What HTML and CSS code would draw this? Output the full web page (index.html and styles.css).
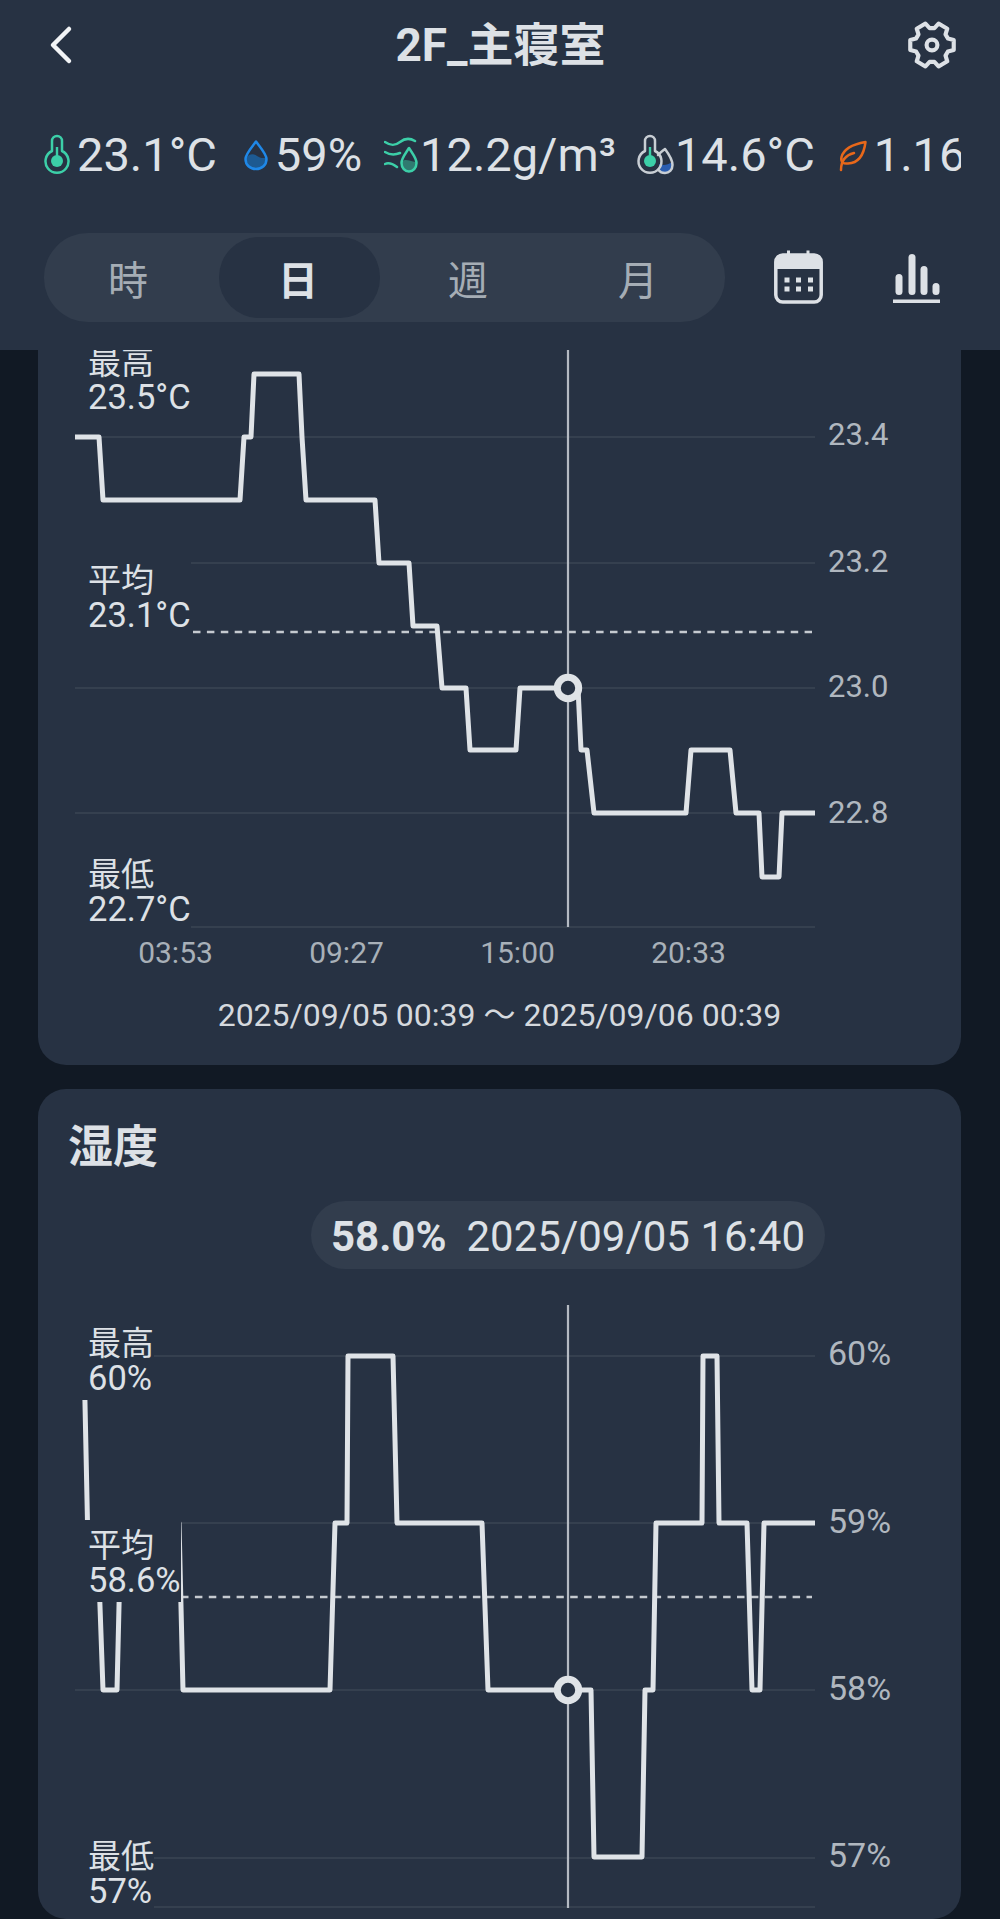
FILE: index.html
```html
<!DOCTYPE html>
<html lang="ja">
<head>
  <meta charset="UTF-8">
  <meta name="viewport" content="width=device-width, initial-scale=1.0">
  <title>2F_主寝室</title>
  <link rel="stylesheet" href="styles.css">
</head>
<body>
  <header class="header">
    <div class="topbar">
      <svg class="back" viewBox="48 24 26 40"><path d="M69 28 L53 44 L69 60" /></svg>
      <h1 class="title">2F_主寝室</h1>
      <svg class="gear" viewBox="-25 -25 50 50">
        <polygon points="15.3,-6.2 20.9,-4.8 20.9,4.8 15.3,6.2 13,10.2 14.7,15.7 6.3,20.6 2.3,16.3 -2.3,16.3 -6.3,20.6 -14.7,15.7 -13,10.2 -15.3,6.2 -20.9,4.8 -20.9,-4.8 -15.3,-6.2 -13,-10.2 -14.7,-15.7 -6.3,-20.6 -2.3,-16.3 2.3,-16.3 6.3,-20.6 14.7,-15.7 13,-10.2" />
        <circle r="5.2" />
      </svg>
    </div>

    <div class="metrics">
      <div class="metric metric-temp">
        <svg class="icon-temp" viewBox="44 132 27 42">
          <path class="teal-line" d="M53 149 V139 a5 5 0 0 1 10 0 V149 a11.5 11.5 0 1 1 -10 0 Z" />
          <circle class="teal-fill" cx="58" cy="159" r="6" />
          <rect class="teal-fill" x="56.8" y="145" width="2.4" height="10" />
        </svg>
        <span>23.1°C</span>
      </div>
      <div class="metric metric-hum">
        <svg class="icon-drop" viewBox="243 137 26 32">
          <path class="drop-water" d="M246 156 C250 151 254 152 257 154 C260 156 264 157 266 155 C267 162 262 167 256 167 C250 167 245 162 246 156 Z" />
          <path class="drop-line" d="M256 139.5 C252 145 245.5 152 245.5 157 C245.5 163 250 167 256 167 C262 167 266.5 163 266.5 157 C266.5 152 260 145 256 139.5 Z" />
        </svg>
        <span>59%</span>
      </div>
      <div class="metric metric-abs">
        <svg class="icon-mist" viewBox="384 136 36 37">
          <path class="teal-line" d="M385 141 C391 145 395 145 400 141 C405 137 410 137 415 140" />
          <path class="teal-line" d="M385 151 C390 154 395 154 400 152" />
          <path class="teal-line" d="M385 163 C389 161 393 163 397 166" />
          <path class="mist-water" d="M402 161 C405 157 409 160 416 161 C417 166 413 170 409 170 C405 170 401 166 402 161 Z" />
          <path class="teal-line" d="M409 147 C406 152 401.5 157 401.5 162 C401.5 167 405 170.5 409 170.5 C413 170.5 416.5 167 416.5 162 C416.5 157 412 152 409 147 Z" />
        </svg>
        <span>12.2g/m³</span>
      </div>
      <div class="metric metric-dew">
        <svg class="icon-dew" viewBox="638 132 38 42">
          <path class="dew-water" d="M661 162 C665 164 670 163 674 160 C675 167 671 171 667 171 C664 171 662 169 661 167 Z" />
          <path class="grey-line" d="M660 153 C664 149 666 148 667 147 C670 151 674.5 157 674.5 163 C674.5 168 671 171 667 171 C664.5 171 662 170 660.5 168" />
          <path class="grey-line" d="M647 149 V139 a5 5 0 0 1 10 0 V149 a11.5 11.5 0 1 1 -10 0 Z" />
          <circle class="teal-fill" cx="652" cy="159" r="6" />
          <rect class="teal-fill" x="650.8" y="145" width="2.4" height="10" />
        </svg>
        <span>14.6°C</span>
      </div>
      <div class="metric metric-vpd">
        <svg class="icon-leaf" viewBox="840 136 30 33">
          <path class="leaf-line" d="M867.5 139 C856 141 846 145 843.5 154 C842.5 159 845 161 850 160.5 C861 160 866 151 867.5 139 Z" />
          <path class="leaf-line" d="M843 167 C843 158 848 152 856 150" />
        </svg>
        <span>1.16</span>
      </div>
    </div>

    <div class="toolbar">
      <div class="tabs">
        <div class="tab">時</div>
        <div class="tab active">日</div>
        <div class="tab">週</div>
        <div class="tab">月</div>
      </div>
      <svg class="icon-calendar" viewBox="772 248 53 57">
        <rect class="cal-frame" x="775.8" y="254" width="45.4" height="47" rx="7" />
        <path class="cal-fill" d="M775.8 268 V261 a7 7 0 0 1 7 -7 H814.2 a7 7 0 0 1 7 7 V268 Z" />
        <rect class="cal-fill" x="787" y="249.5" width="3" height="6" />
        <rect class="cal-fill" x="806.5" y="249.5" width="3" height="6" />
        <rect class="cal-fill" x="784.5" y="276.5" width="5" height="5" />
        <rect class="cal-fill" x="796" y="276.5" width="5" height="5" />
        <rect class="cal-fill" x="808" y="276.5" width="5" height="5" />
        <rect class="cal-fill" x="784.5" y="285.5" width="5" height="5" />
        <rect class="cal-fill" x="796" y="285.5" width="5" height="5" />
        <rect class="cal-fill" x="808" y="285.5" width="5" height="5" />
      </svg>
      <svg class="icon-bars" viewBox="891 250 51 52">
        <rect x="895.5" y="272" width="7" height="21" rx="3.5" />
        <rect x="908.5" y="252" width="7" height="41" rx="3.5" />
        <rect x="920.5" y="264" width="7" height="29" rx="3.5" />
        <rect x="932.5" y="281" width="7" height="12" rx="3.5" />
        <rect x="893" y="297.5" width="47" height="3.5" />
      </svg>
    </div>
  </header>

  <main class="content">
    <section class="card card-first">
      <div class="chart chart-temp">
        <svg class="plot" viewBox="38 350 923 582">
          <line class="grid" x1="75" y1="437" x2="815" y2="437" />
          <line class="grid" x1="75" y1="563" x2="815" y2="563" />
          <line class="grid" x1="75" y1="688" x2="815" y2="688" />
          <line class="grid" x1="75" y1="813" x2="815" y2="813" />
          <line class="grid" x1="75" y1="927" x2="815" y2="927" />
          <line class="avg" x1="193" y1="632" x2="812" y2="632" />
          <line class="cursor" x1="568" y1="350" x2="568" y2="927" />
          <polyline class="data" points="75,437 99,437 103,500 240,500 244,437 251,437 254,374 299,374 302,437 306,500 375,500 379,563 409,563 413,626 437,626 442,688 466,688 470,750 516,750 520,688 578,688 581,750 587,750 594,813 686,813 691,750 730,750 736,813 759,813 762,877 779,877 782,813 815,813" />
          <circle class="marker" cx="568" cy="688" r="10.7" />
          <text class="axis" x="828" y="445">23.4</text>
          <text class="axis" x="828" y="572">23.2</text>
          <text class="axis" x="828" y="697">23.0</text>
          <text class="axis" x="828" y="823">22.8</text>
        </svg>
        <div class="tag temp-max">最高<br><span class="tag-value">23.5°C</span></div>
        <div class="tag temp-avg">平均<br><span class="tag-value">23.1°C</span></div>
        <div class="tag temp-min">最低<br><span class="tag-value">22.7°C</span></div>
      </div>
      <div class="ticks">
        <span>03:53</span>
        <span>09:27</span>
        <span>15:00</span>
        <span>20:33</span>
      </div>
      <p class="range">2025/09/05 00:39 〜 2025/09/06 00:39</p>
    </section>

    <section class="card">
      <h2 class="card-title">湿度</h2>
      <div class="readout"><b>58.0%</b><span>2025/09/05 16:40</span></div>
      <div class="chart chart-hum">
        <svg class="plot" viewBox="38 1300 923 619">
          <line class="grid" x1="75" y1="1356" x2="815" y2="1356" />
          <line class="grid" x1="75" y1="1523" x2="815" y2="1523" />
          <line class="grid" x1="75" y1="1690" x2="815" y2="1690" />
          <line class="grid" x1="75" y1="1858" x2="815" y2="1858" />
          <line class="grid" x1="75" y1="1907" x2="815" y2="1907" />
          <line class="avg" x1="181" y1="1597" x2="812" y2="1597" />
          <line class="cursor" x1="568" y1="1305" x2="568" y2="1908" />
          <polyline class="data" points="75,1356 84,1356 87.5,1523 97,1523 103,1690 117,1690 121,1523 179,1523 183,1690 330,1690 335,1523 347,1523 348,1356 393,1356 397,1523 482,1523 488,1690 591,1690 594,1857 642,1857 645,1690 653,1690 656,1523 702,1523 703,1356 717,1356 719,1523 747,1523 752,1690 760,1690 764,1523 815,1523" />
          <circle class="marker" cx="568" cy="1690" r="10.7" />
          <text class="axis axis-pct" x="828" y="1365">60%</text>
          <text class="axis axis-pct" x="828" y="1533">59%</text>
          <text class="axis axis-pct" x="828" y="1700">58%</text>
          <text class="axis axis-pct" x="828" y="1867">57%</text>
        </svg>
        <div class="tag hum-max">最高<br><span class="tag-value">60%</span></div>
        <div class="tag hum-avg">平均<br><span class="tag-value">58.6%</span></div>
        <div class="tag hum-min">最低<br><span class="tag-value">57%</span></div>
      </div>
    </section>
  </main>
</body>
</html>
```

FILE: styles.css
```css
* {
  margin: 0;
  padding: 0;
  box-sizing: border-box;
}

body {
  width: 1000px;
  height: 1919px;
  overflow: hidden;
  font-family: Roboto, "Noto Sans CJK JP", sans-serif;
  background-color: #111924;
  color: #dde1e6;
}

svg {
  display: block;
  flex-shrink: 0;
}

/* header */

.header {
  position: relative;
  z-index: 2;
  height: 350px;
  background-color: #273243;
}

.topbar {
  display: flex;
  justify-content: space-between;
  align-items: center;
  height: 90px;
  padding: 0 42px 0 48px;
}

.back {
  width: 26px;
  height: 40px;
  margin-right: 21px;
  fill: none;
  stroke: #f2f4f6;
  stroke-width: 4.5;
  stroke-linecap: round;
  stroke-linejoin: round;
}

.title {
  font-size: 46px;
  line-height: 60px;
  font-weight: 700;
}

.gear {
  width: 52px;
  height: 52px;
  fill: none;
  stroke: #dde1e6;
  stroke-width: 4;
  stroke-linejoin: round;
}

.metrics {
  display: flex;
  width: 923px;
  height: 60px;
  margin: 35px 0 0 38px;
  padding-left: 5px;
  overflow: hidden;
}

.metric {
  display: flex;
  align-items: center;
  flex-shrink: 0;
  font-size: 47px;
  line-height: 60px;
  white-space: nowrap;
}

.metric-temp { gap: 7px; }
.metric-hum { gap: 6px; margin-left: 26px; }
.metric-abs { gap: 0; margin-left: 22px; }
.metric-dew { gap: 1px; margin-left: 20px; }
.metric-vpd { gap: 6px; margin-left: 23px; }

.icon-temp { width: 27px; height: 42px; }
.icon-drop { width: 26px; height: 32px; }
.icon-mist { width: 36px; height: 37px; }
.icon-dew { width: 38px; height: 42px; }
.icon-leaf { width: 30px; height: 33px; }

.teal-line,
.drop-line,
.grey-line,
.leaf-line {
  fill: none;
  stroke-width: 2.5;
  stroke-linecap: round;
  stroke-linejoin: round;
}

.teal-line { stroke: #3ccfa8; }
.teal-fill { fill: #3ccfa8; }
.drop-line { stroke: #1f88e8; }
.drop-water { fill: #1d5a92; }
.mist-water { fill: #2f7a70; }
.grey-line { stroke: #c8ced4; }
.dew-water { fill: #2a5db0; }
.leaf-line { stroke: #e8681a; }

.toolbar {
  display: flex;
  align-items: center;
  height: 89px;
  margin: 48px 0 0 44px;
}

.tabs {
  display: flex;
  flex-shrink: 0;
  width: 681px;
  height: 89px;
  padding: 4px 0;
  border-radius: 44px;
  background-color: #323d4d;
}

.tab {
  display: flex;
  justify-content: center;
  align-items: center;
  width: 161px;
  margin: 0 4.5px;
  padding: 0 2px 0 0;
  border-radius: 40px;
  font-size: 40px;
  color: #a5adb5;
}

.tab.active {
  background-color: #273243;
  color: #dde1e6;
  font-weight: 700;
}

.icon-calendar {
  width: 53px;
  height: 57px;
  margin-left: 47px;
}

.cal-frame {
  fill: none;
  stroke: #dde1e6;
  stroke-width: 3.5;
}

.cal-fill { fill: #dde1e6; }

.icon-bars {
  width: 51px;
  height: 52px;
  margin-left: 66px;
  fill: #dde1e6;
}

/* cards */

.content {
  display: flex;
  flex-direction: column;
  gap: 24px;
  height: 1569px;
  padding: 0 39px 0 38px;
  overflow: hidden;
}

.card {
  flex-shrink: 0;
  border-radius: 28px;
  background-color: #273243;
}

.card-first {
  height: 715px;
  border-radius: 0 0 28px 28px;
}

.card-title {
  padding: 29px 0 0 30px;
  font-size: 45px;
  line-height: 60px;
  font-weight: 700;
}

.readout {
  display: flex;
  align-items: center;
  gap: 20px;
  width: fit-content;
  height: 68px;
  margin: 23px 136px 0 auto;
  padding: 3px 20px 0;
  border-radius: 34px;
  background-color: #323d4d;
  font-size: 42px;
  white-space: nowrap;
}

.chart {
  position: relative;
}

.chart-temp { height: 582px; }

.chart-hum {
  height: 619px;
  margin-top: 31px;
}

.plot {
  width: 923px;
  height: 100%;
}

.grid {
  stroke: #35404f;
  stroke-width: 2;
}

.avg {
  stroke: #c5cad0;
  stroke-width: 2.5;
  stroke-dasharray: 7.5 6.4;
}

.cursor {
  stroke: #b4bac2;
  stroke-width: 2.2;
}

.data {
  fill: none;
  stroke: #dfe3e7;
  stroke-width: 5;
  stroke-linejoin: round;
}

.marker {
  fill: #273243;
  stroke: #dfe3e7;
  stroke-width: 7;
}

.axis {
  font-family: Roboto, sans-serif;
  font-size: 31px;
  fill: #b0b7bf;
}

.axis-pct { font-size: 34px; }

/* labels sit over the plot and hide whatever runs behind them */
.tag {
  position: absolute;
  left: 37px;
  padding: 9px 0 4px 13px;
  font-size: 33px;
  line-height: 34px;
  background-color: #273243;
  white-space: nowrap;
}

.tag-value { font-size: 34.5px; }

.temp-max { top: -13px; }
.temp-avg { top: 205px; }
.temp-min { top: 499px; }
.hum-max { top: 18px; }
.hum-avg { top: 220px; }
.hum-min { top: 531px; }

.ticks {
  display: flex;
  height: 28px;
  margin-top: 7px;
  padding-left: 52px;
  font-size: 30px;
  line-height: 28px;
  color: #a8b0b8;
}

.ticks span {
  width: 171px;
  text-align: center;
}

.range {
  margin-top: 33px;
  font-size: 32px;
  line-height: 30px;
  text-align: center;
  color: #d5d9de;
}
```
